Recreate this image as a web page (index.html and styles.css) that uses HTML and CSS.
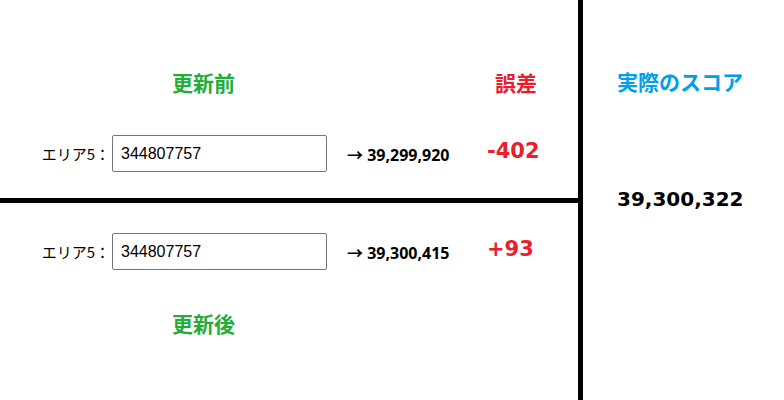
FILE: index.html
```html
<!DOCTYPE html>
<html lang="ja">
<head>
  <meta charset="UTF-8">
  <meta name="viewport" content="width=device-width, initial-scale=1.0">
  <title>スコア誤差チェック</title>
  <link rel="stylesheet" href="styles.css">
</head>
<body>
  <div class="board">
    <div class="compare">
      <section class="half before">
        <div class="grid-row heads">
          <h2 class="title green col-input">更新前</h2>
          <h2 class="title red col-diff">誤差</h2>
        </div>
        <div class="grid-row area-row">
          <label class="area-label" for="before5">エリア5：</label>
          <input class="area-input" type="text" id="before5" value="344807757">
          <span class="total">→ 39,299,920</span>
          <span class="diff">-402</span>
        </div>
      </section>
      <section class="half after">
        <div class="grid-row area-row">
          <label class="area-label" for="after5">エリア5：</label>
          <input class="area-input" type="text" id="after5" value="344807757">
          <span class="total">→ 39,300,415</span>
          <span class="diff">+93</span>
        </div>
        <div class="grid-row heads heads-bottom">
          <h2 class="title green col-input">更新後</h2>
        </div>
      </section>
    </div>
    <div class="actual">
      <h2 class="title blue">実際のスコア</h2>
      <p class="actual-score">39,300,322</p>
    </div>
  </div>
</body>
</html>
```

FILE: styles.css
```css
body {
  margin: 0;
  background: #fff;
  color: #000;
  font-family: "Noto Sans CJK JP", sans-serif;
}
.board {
  display: flex;
  height: 400px;
}
.compare {
  width: 578px;
  border-right: 5px solid #000;
}
.half {
  box-sizing: border-box;
}
.before {
  height: 203px;
  padding-top: 67px;
  border-bottom: 5px solid #000;
}
.after {
  padding-top: 30px;
}
.grid-row {
  display: grid;
  grid-template-columns: 112px 235px 140px 1fr;
  align-items: center;
}
.heads {
  height: 30px;
  margin-bottom: 38px;
}
.heads-bottom {
  margin: 38px 0 0;
}
.title {
  margin: 0;
  font-size: 21px;
  line-height: 30px;
  font-weight: bold;
}
.green { color: #22ac38; }
.red { color: #e8202e; }
.blue { color: #00a0e9; }
.col-input {
  grid-column: 2;
  padding-left: 60px;
}
.col-diff {
  grid-column: 4;
  padding-left: 8px;
}
.area-row {
  height: 37px;
}
.area-label {
  font-size: 15px;
  text-align: right;
  padding-right: 2px;
}
.area-input {
  box-sizing: border-box;
  width: 215px;
  height: 37px;
  padding: 0 8px;
  border: 1px solid #767676;
  border-radius: 2px;
  font-family: "Liberation Sans", Arial, sans-serif;
  font-size: 16px;
  color: #000;
}
.total {
  font-family: "Noto Sans", "Noto Sans CJK JP", sans-serif;
  font-size: 16px;
  font-weight: bold;
}
.diff {
  margin-bottom: 6px;
  font-family: "DejaVu Sans", sans-serif;
  font-size: 21px;
  font-weight: bold;
  color: #e8202e;
}
.actual {
  flex: 1;
  padding: 66px 0 0 34px;
}
.actual-score {
  margin: 88px 0 0;
  font-family: "DejaVu Sans", sans-serif;
  font-size: 20px;
  line-height: 30px;
  font-weight: bold;
}
```
